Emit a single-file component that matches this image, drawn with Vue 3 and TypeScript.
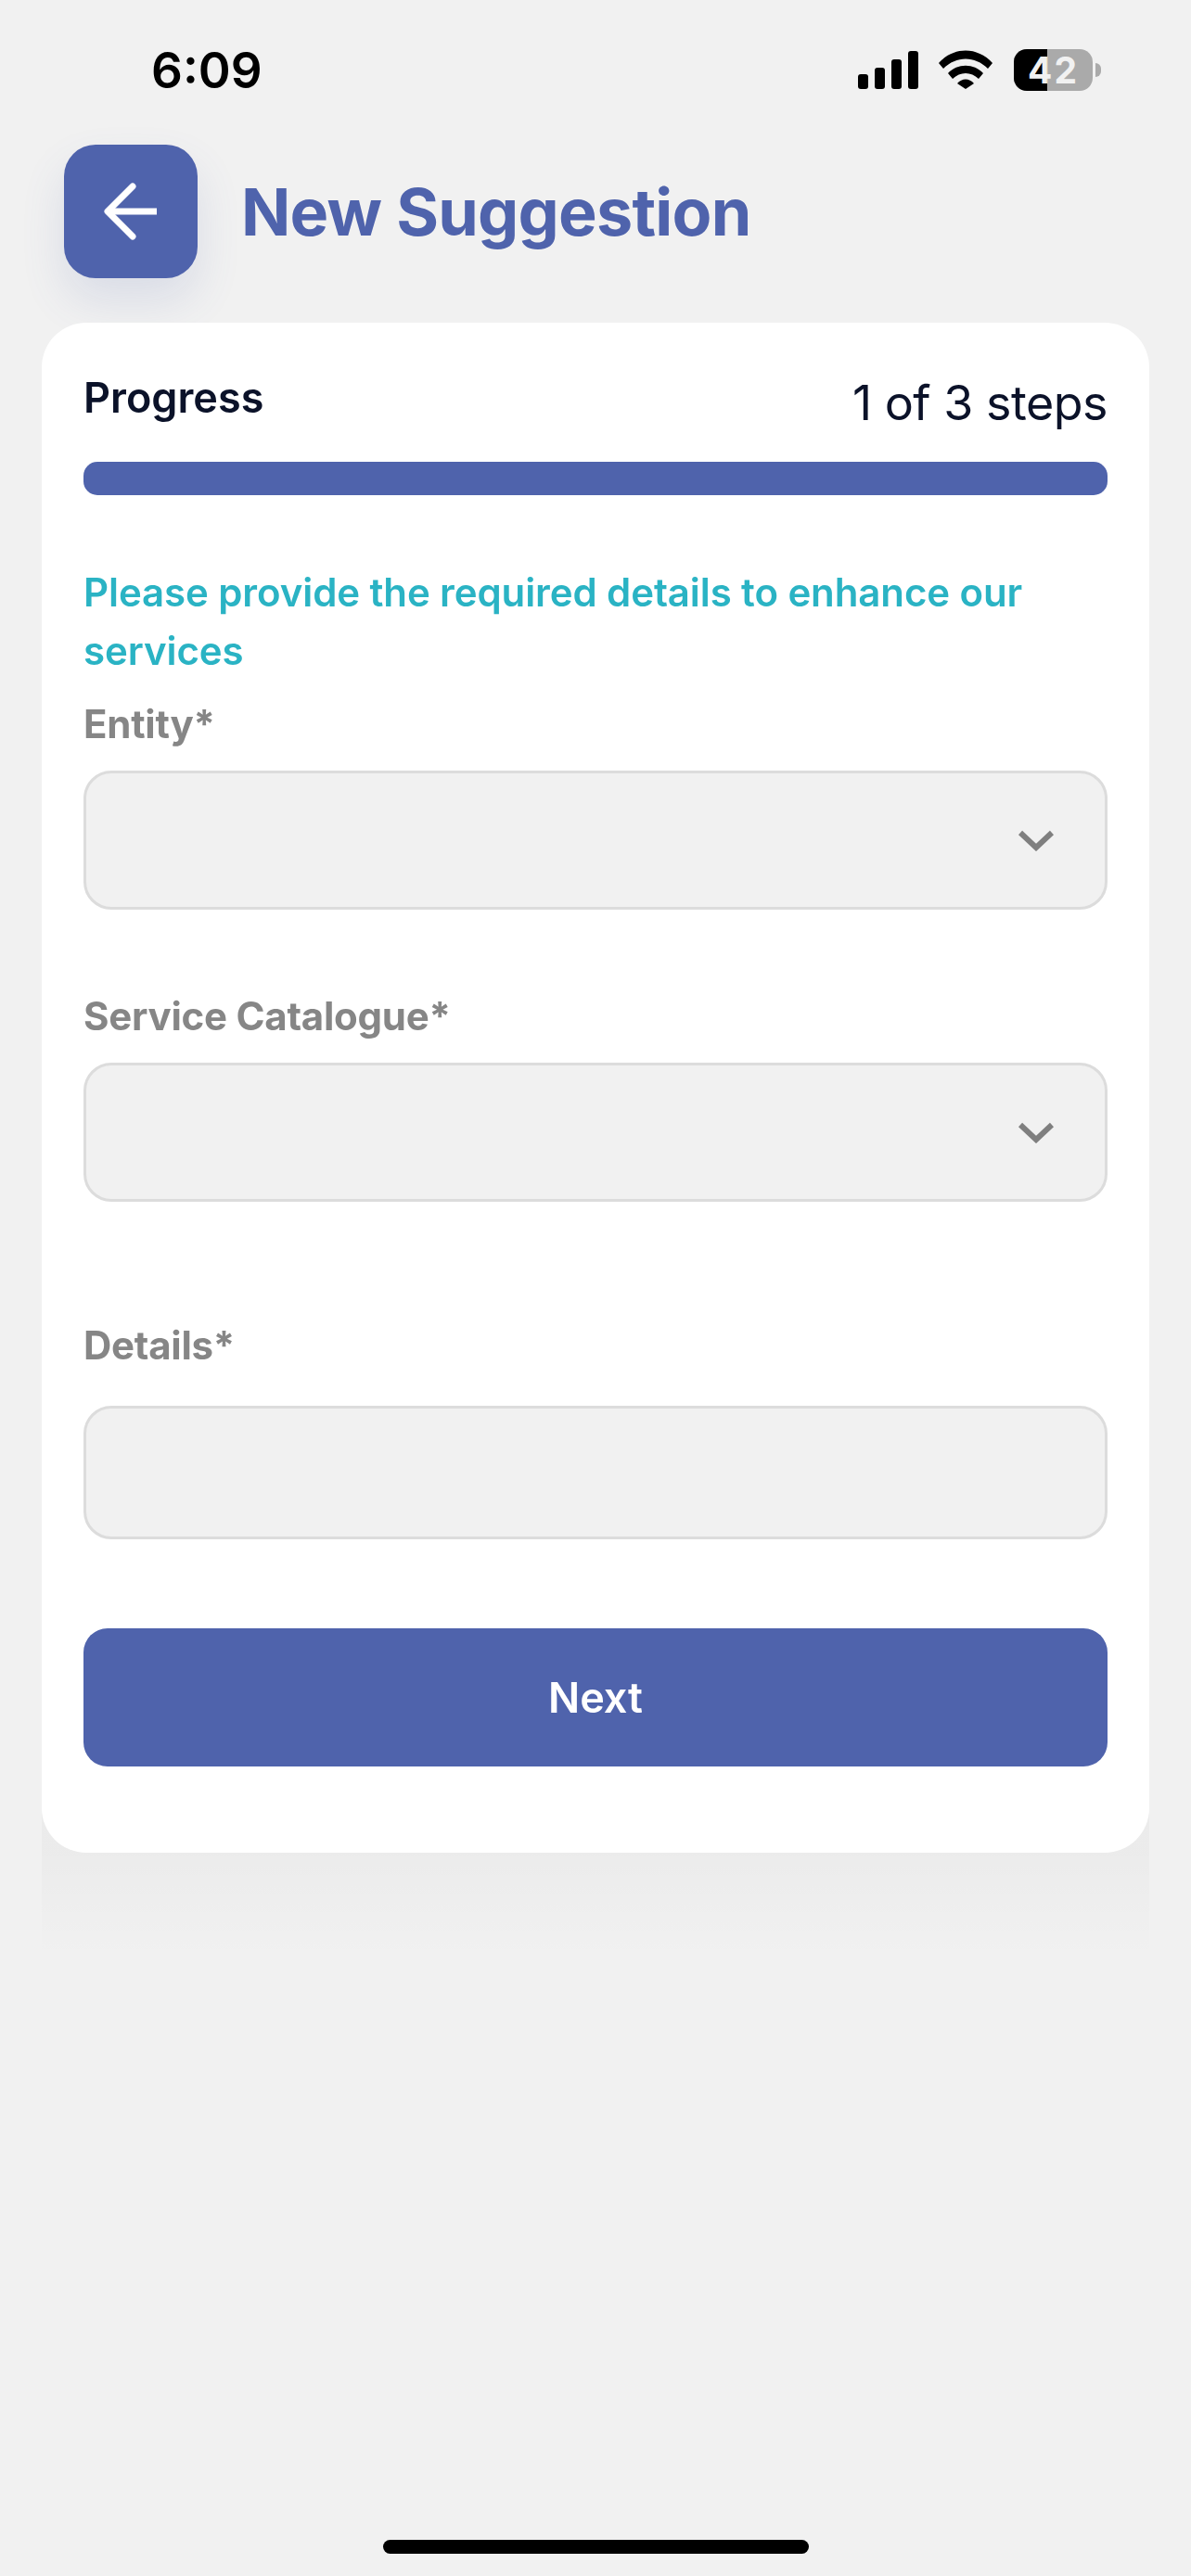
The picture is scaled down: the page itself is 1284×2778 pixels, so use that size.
<template>
  <div class="page">
    <div class="status-bar">
      <span class="status-bar__time">6:09</span>
      <div class="status-bar__icons">
        <svg class="signal" width="65" height="41" viewBox="0 0 65 41" fill="#000">
          <rect x="0" y="25" width="11" height="16" rx="3" />
          <rect x="18" y="18" width="11" height="23" rx="3" />
          <rect x="36" y="9" width="11" height="32" rx="3" />
          <rect x="54" y="0" width="11" height="41" rx="3" />
        </svg>
        <svg class="wifi" width="58" height="42" viewBox="0 0 58 42" fill="#000">
          <path d="M0 14 C16 -4 42 -4 58 14 L53 20 C39 6 19 6 5 20 Z" />
          <path d="M10 25 C20 14 38 14 48 25 L43 31 C35 23 23 23 15 31 Z" />
          <path d="M20 36 C25 30 33 30 38 36 L29 42 Z" />
        </svg>
        <div class="battery">
          <div class="battery__body">
            <div class="battery__fill"></div>
            <span class="battery__text">42</span>
          </div>
          <div class="battery__nub"></div>
        </div>
      </div>
    </div>

    <header class="top">
      <button class="back-btn" type="button" aria-label="Back">
        <svg width="60" height="62" viewBox="0 0 60 62" fill="none" stroke="#fff" stroke-width="7" stroke-linecap="round" stroke-linejoin="round">
          <path d="M32 4 L5 31 M5 31 L32 58" />
          <path d="M5 31 H58" stroke-linecap="butt" />
        </svg>
      </button>
      <h1 class="top__title">New Suggestion</h1>
    </header>

    <main class="card">
      <div class="card__body">
        <div class="progress-head">
          <span class="progress-head__label">Progress</span>
          <span class="progress-head__steps">1 of 3 steps</span>
        </div>
        <div class="progress-bar"></div>

        <p class="intro">Please provide the required details to enhance our services</p>

        <label class="label">Entity*</label>
        <div class="field field--select">
          <svg class="chevron" width="38" height="24" viewBox="0 0 38 24" fill="none" stroke="#7f7f7f" stroke-width="6">
            <path d="M2 4 L19 20 L36 4" />
          </svg>
        </div>

        <label class="label label--second">Service Catalogue*</label>
        <div class="field field--select">
          <svg class="chevron" width="38" height="24" viewBox="0 0 38 24" fill="none" stroke="#7f7f7f" stroke-width="6">
            <path d="M2 4 L19 20 L36 4" />
          </svg>
        </div>

        <label class="label label--details">Details*</label>
        <div class="field field--text"></div>

        <button class="next-btn" type="button">Next</button>
      </div>
    </main>

    <div class="home-bar"></div>
  </div>
</template>

<script setup lang="ts">
</script>

<style>
html, body {
  margin: 0;
  background: #f0f0f0;
}
</style>

<style scoped>
.page {
  width: 1284px;
  height: 2778px;
  display: flex;
  flex-direction: column;
  overflow: hidden;
  isolation: isolate;
  background: #f1f1f1;
  font-family: Inter, "Liberation Sans", sans-serif;
}

.status-bar {
  height: 156px;
  flex: none;
  display: flex;
  justify-content: space-between;
  align-items: flex-start;
  padding: 0 97px 0 163px;
  box-sizing: border-box;
}

.status-bar__time {
  margin-top: 45px;
  font-size: 53px;
  line-height: 62px;
  font-weight: 600;
  color: #000;
  will-change: opacity;
}

.status-bar__icons {
  margin-top: 53px;
  display: flex;
  align-items: flex-start;
  gap: 23px;
}

.signal {
  margin-top: 2px;
  margin-right: -1px;
}

.wifi {
  margin-top: 1px;
}

.battery {
  display: flex;
  align-items: center;
  gap: 3px;
}

.battery__body {
  position: relative;
  width: 85px;
  height: 45px;
  border-radius: 14px;
  background: #aaaaaa;
  overflow: hidden;
}

.battery__fill {
  width: 36px;
  height: 100%;
  background: #000;
}

.battery__text {
  position: absolute;
  inset: 0;
  text-align: center;
  font-size: 39px;
  line-height: 45px;
  font-weight: 700;
  letter-spacing: 2px;
  color: #f1f1f1;
}

.battery__nub {
  width: 6px;
  height: 15px;
  border-radius: 0 8px 8px 0;
  background: #aaaaaa;
}

.top {
  height: 192px;
  flex: none;
  display: flex;
  align-items: flex-start;
  gap: 47px;
  padding-left: 69px;
  box-sizing: border-box;
}

.back-btn {
  width: 144px;
  height: 144px;
  flex: none;
  display: flex;
  align-items: center;
  justify-content: center;
  padding: 0;
  border: none;
  border-radius: 34px;
  background: #4f63ac;
  box-shadow: 0 24px 48px rgba(79, 99, 172, 0.14);
}

.top__title {
  margin: 31px 0 0;
  font-size: 70px;
  line-height: 84px;
  font-weight: 700;
  letter-spacing: -0.75px;
  color: #4f63ac;
  will-change: opacity;
}

.card {
  position: relative;
  margin: 0 45px;
  height: 1650px;
  flex: none;
  box-sizing: border-box;
  background: #fff;
  border-radius: 48px;
}

/* soft band under the card, same width as the card */
.card::after {
  content: "";
  position: absolute;
  z-index: -1;
  left: 0;
  right: 0;
  top: calc(100% - 48px);
  height: 162px;
  background: linear-gradient(rgba(0, 0, 0, 0.022) 30%, rgba(0, 0, 0, 0));
}

.card__body {
  padding: 53px 45px 0;
  will-change: opacity;
}

.progress-head {
  display: flex;
  justify-content: space-between;
  align-items: flex-start;
  height: 97px;
}

.progress-head__label {
  font-size: 45px;
  line-height: 56px;
  font-weight: 600;
  color: #0b1229;
}

.progress-head__steps {
  margin-top: 4px;
  font-size: 52px;
  line-height: 60px;
  font-weight: 400;
  letter-spacing: -0.5px;
  color: #0b1229;
}

.progress-bar {
  height: 36px;
  border-radius: 15px;
  background: #4f63ac;
}

.intro {
  margin: 73px 0 0;
  font-size: 42px;
  line-height: 63px;
  font-weight: 600;
  letter-spacing: -0.1px;
  color: #2ab3c4;
}

.label {
  display: block;
  font-size: 42px;
  line-height: 54px;
  font-weight: 700;
  letter-spacing: -0.25px;
  color: #868686;
}

.intro + .label {
  margin-top: 21px;
}

.label--second {
  margin-top: 88px;
}

.label--details {
  margin-top: 128px;
}

.field {
  box-sizing: border-box;
  border: 3px solid #dcdcdc;
  border-radius: 30px;
  background: #f1f1f1;
}

.field--select {
  height: 150px;
  margin-top: 23px;
  display: flex;
  align-items: center;
  justify-content: flex-end;
  padding-right: 55px;
}

.chevron {
  flex: none;
}

.field--text {
  height: 144px;
  margin-top: 38px;
}

.next-btn {
  display: block;
  width: 100%;
  height: 149px;
  margin-top: 96px;
  padding: 0;
  border: none;
  border-radius: 26px;
  background: #4f63ac;
  font-family: inherit;
  font-size: 45px;
  font-weight: 600;
  color: #fff;
}

.home-bar {
  width: 459px;
  height: 15px;
  margin: auto auto 24px;
  border-radius: 8px;
  background: #000;
}
</style>
